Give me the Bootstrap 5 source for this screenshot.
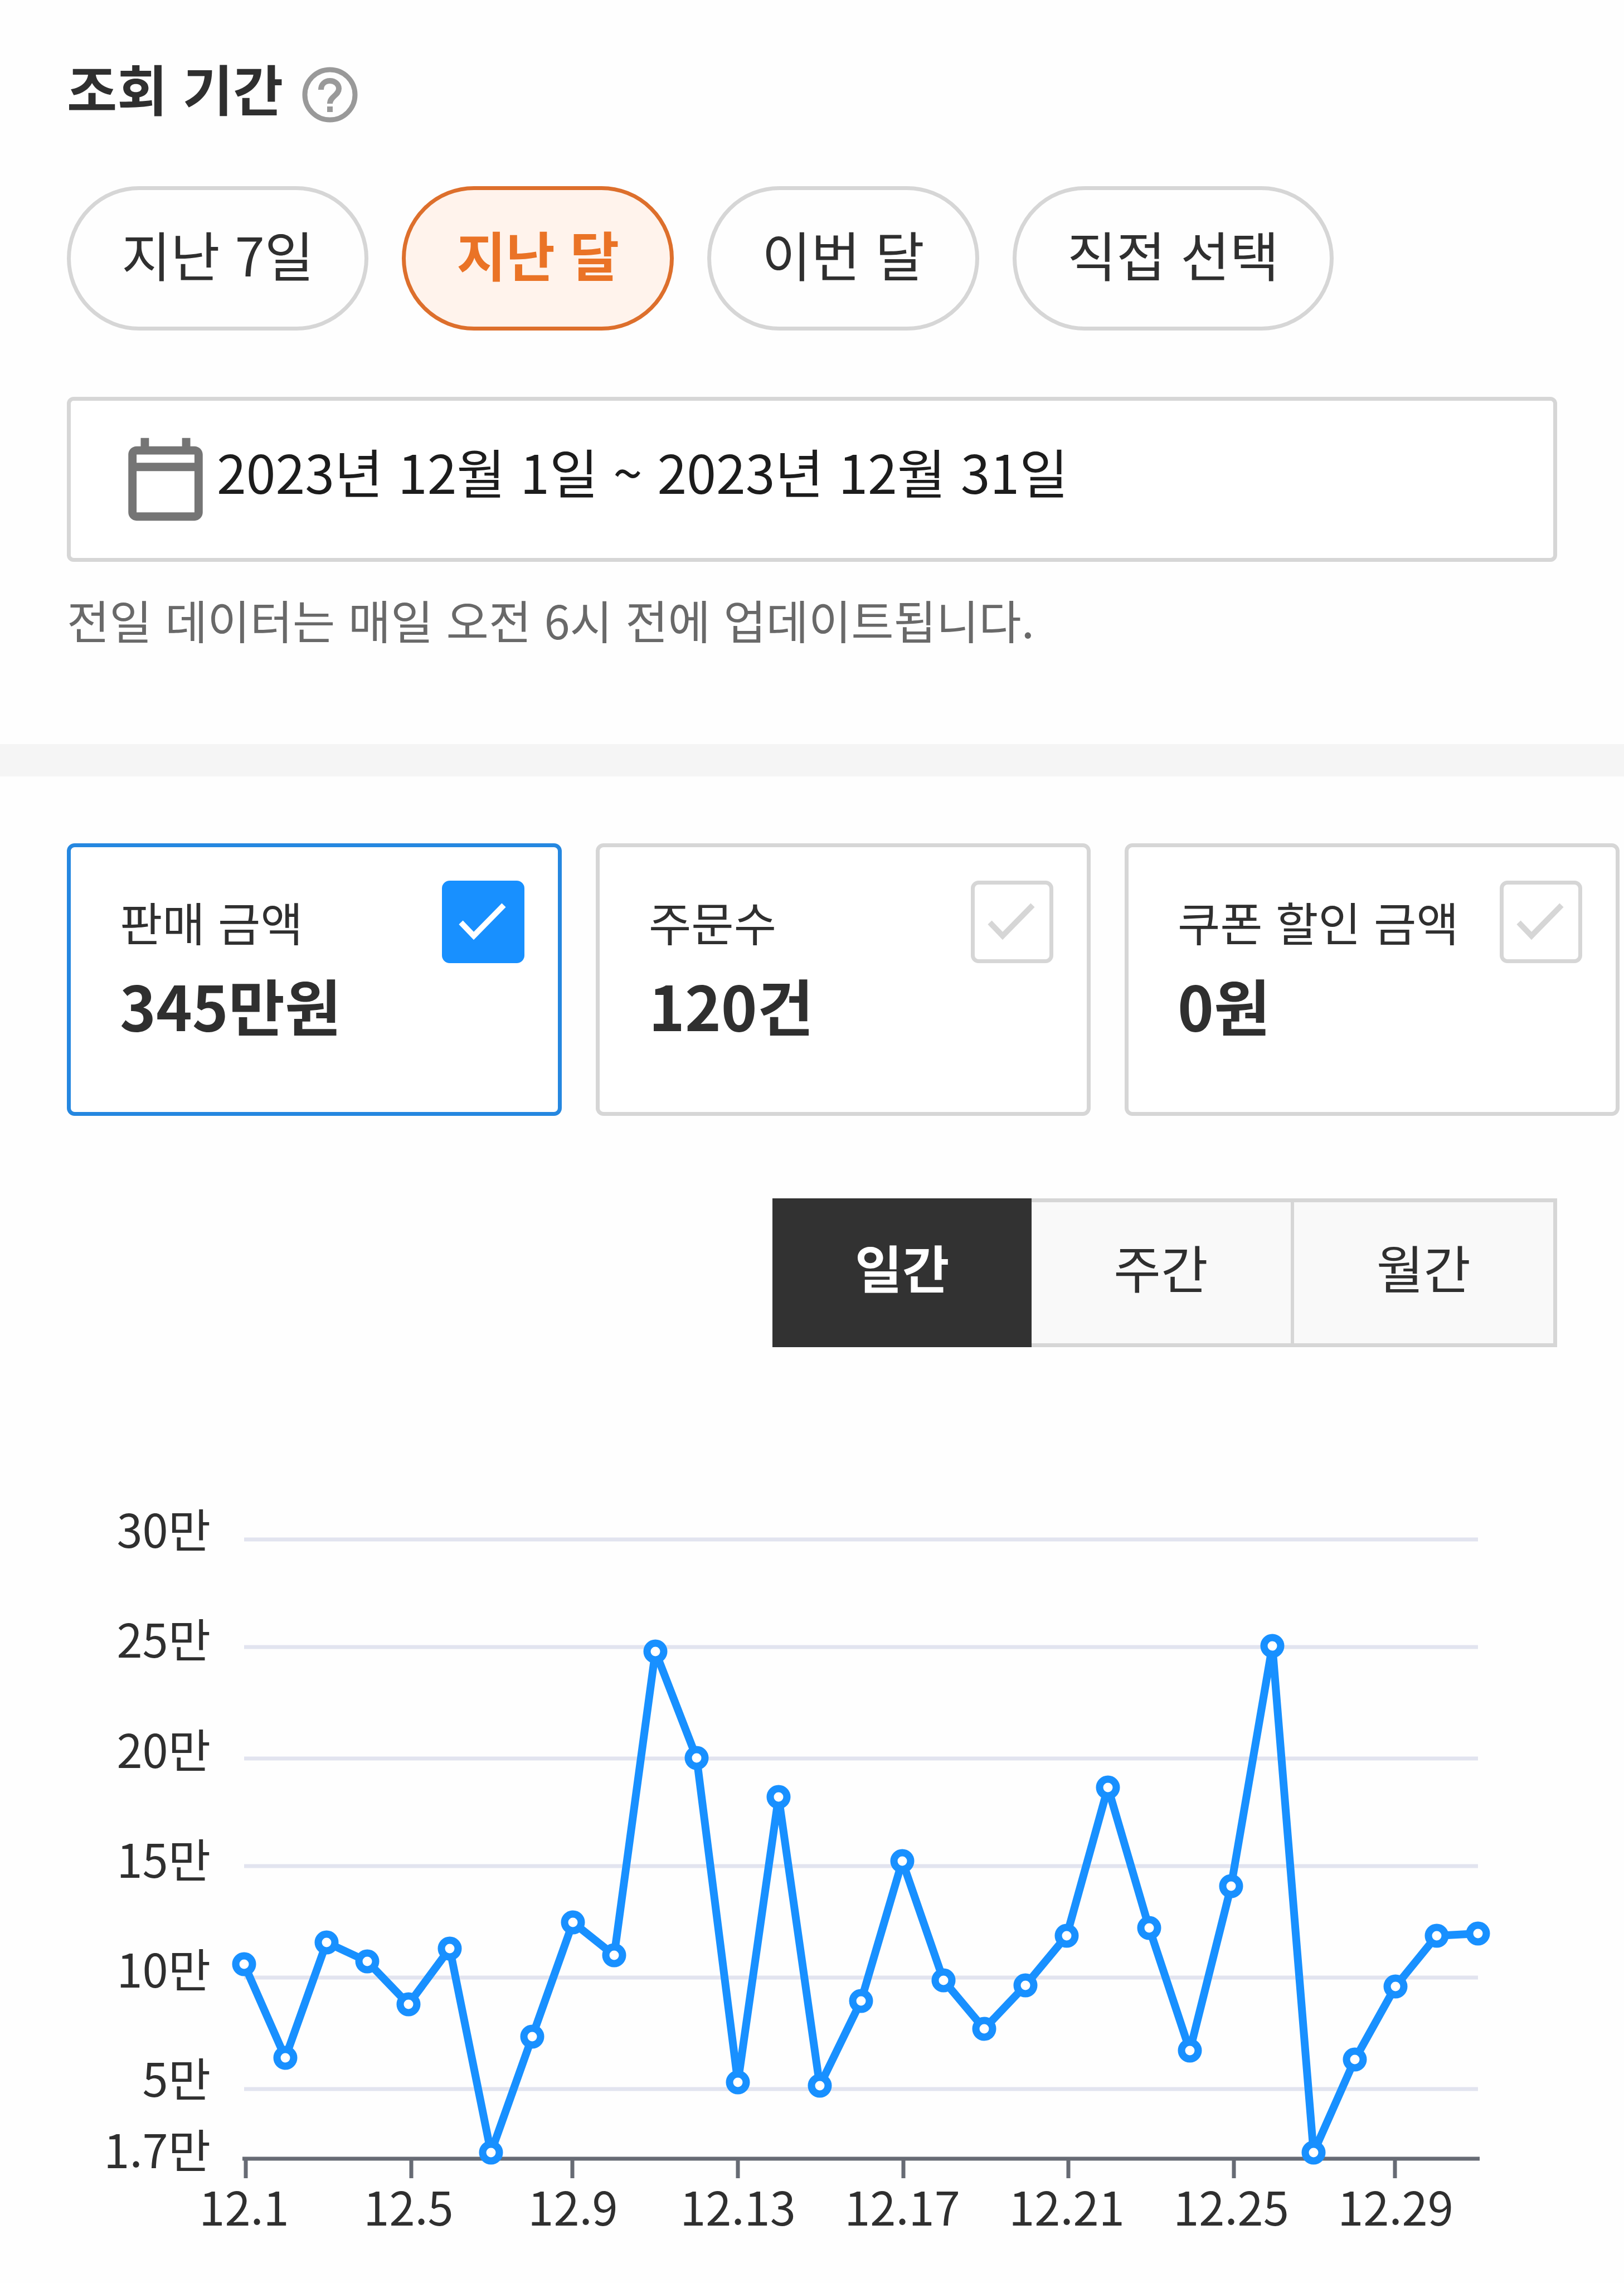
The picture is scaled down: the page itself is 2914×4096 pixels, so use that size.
<!DOCTYPE html>
<html lang="ko">
<head>
<meta charset="utf-8">
<meta name="viewport" content="width=device-width, initial-scale=1">
<title>판매 통계</title>
<link href="https://cdn.jsdelivr.net/npm/bootstrap@5.3.0/dist/css/bootstrap.min.css" rel="stylesheet">
<style>
  :root { --ink: #2f2f2f; --line: #d6d6d6; --blue: #1890ff; --orange: #ea7326; --edge: 120px; }
  body { font-family: "Noto Sans CJK KR", sans-serif; color: var(--ink); background: #fefefe; overflow-x: hidden; }
  .period { padding: 96px var(--edge) 164px; }
  .period-title { font-size: 98px; line-height: 120px; font-weight: 700; padding-bottom: 28px; }
  .help-btn { margin-left: 34px; width: 100px; height: 100px; }
  .pill-row { margin-top: 90px; gap: 60px; }
  .pill-btn { --bs-btn-border-color: var(--line); --bs-btn-color: var(--ink); border-width: 7px; font-size: 96px; line-height: 120px; padding: 54px 91px 71px; }
  .pill-btn.active { --bs-btn-active-bg: #fff3ec; --bs-btn-active-border-color: #dd6f2c; --bs-btn-active-color: var(--orange); font-weight: 700; }
  .date-box { margin-top: 119px; height: 296px; border: 7px solid var(--line); border-radius: 12px; padding-left: 81px; }
  .date-box svg { width: 178px; height: 178px; flex: none; }
  .date-input { font-size: 95px; line-height: 140px; color: #1c1c1c; padding: 0 0 30px 3px; }
  .notice { margin-top: 43px; font-size: 83px; line-height: 120px; color: #696969; }
  .divider { height: 58px; background: #f5f5f5; }
  .stats { padding-top: 120px; }
  .stat-row { padding-left: var(--edge); gap: 61px; overflow: hidden; }
  .stat-card { flex: 0 0 888px; border: 7px solid var(--line); border-radius: 14px; background: #fff; padding: 60px 60px 123px 88px; }
  .stat-card.selected { border-color: #2587e0; }
  .stat-label { font-size: 83px; line-height: 110px; margin-top: 18px; }
  .stat-value { font-size: 110px; line-height: 140px; margin-top: 24px; font-weight: 700; }
  .stat-check.form-check-input { width: 148px; height: 148px; margin: 0; border: 7px solid var(--line); border-radius: 14px; background: #fff center / 148px 148px no-repeat; background-origin: border-box;
    background-image: url("data:image/svg+xml,%3Csvg xmlns='http://www.w3.org/2000/svg' viewBox='0 0 148 148'%3E%3Cpath d='M34 75l23 24 54-55' fill='none' stroke='%23d6d6d6' stroke-width='10'/%3E%3C/svg%3E"); }
  .stat-check.form-check-input:checked { background-color: var(--blue); border-color: var(--blue);
    background-image: url("data:image/svg+xml,%3Csvg xmlns='http://www.w3.org/2000/svg' viewBox='0 0 148 148'%3E%3Cpath d='M34 75l23 24 54-55' fill='none' stroke='%23fff' stroke-width='10'/%3E%3C/svg%3E"); }
  .unit-row { margin-top: 148px; padding-right: var(--edge); }
  .unit-group { width: 1408px; }
  .unit-btn { --bs-btn-bg: #f9f9f9; --bs-btn-border-color: var(--line); --bs-btn-color: var(--ink); flex: 1 1 0; border-width: 7px; font-size: 92px; line-height: 120px; padding: 55px 0 78px; }
  .unit-btn.active { --bs-btn-active-bg: #323232; --bs-btn-active-border-color: #323232; --bs-btn-active-color: #fff; border-width: 7px 0; font-weight: 700; }
  .unit-group > .unit-btn:not(:first-child) { margin-left: 0; border-left: 0; }
  .chart { margin-top: 243px; }
  .chart text { font-size: 83px; fill: var(--ink); }
  .chart .grid-line { stroke: #e2e4ef; stroke-width: 7; }
  .chart .axis-line { stroke: #676b74; stroke-width: 7; }
</style>
</head>
<body>
<main>
  <section class="period">
    <div class="d-flex align-items-center">
      <h1 class="period-title mb-0">조회 기간</h1>
      <button type="button" class="help-btn btn p-0 border-0 d-flex" aria-label="도움말">
        <svg viewBox="0 0 100 100" width="100" height="100" fill="none" stroke="#999" aria-hidden="true">
          <circle cx="50" cy="50" r="45" stroke-width="9"/>
          <path d="M34 41C34 31 41 25 50 25C59 25 66 31 66 39C66 51 50 53 50 66" stroke-width="10"/>
          <path d="M50 71V81" stroke-width="10"/>
        </svg>
      </button>
    </div>
    <div class="pill-row d-flex">
      <button type="button" class="pill-btn btn rounded-pill">지난 7일</button>
      <button type="button" class="pill-btn btn rounded-pill active" aria-pressed="true">지난 달</button>
      <button type="button" class="pill-btn btn rounded-pill">이번 달</button>
      <button type="button" class="pill-btn btn rounded-pill">직접 선택</button>
    </div>
    <label class="date-box d-flex align-items-center bg-white">
      <svg viewBox="0 0 24 24" fill="#757575" aria-hidden="true"><path d="M19 4h-1V2h-2v2H8V2H6v2H5c-1.1 0-2 .9-2 2v14c0 1.1 .9 2 2 2h14c1.1 0 2-.9 2-2V6c0-1.1-.9-2-2-2zm0 16H5V10h14v10zm0-12H5V6h14v2z"/></svg>
      <input type="text" class="date-input form-control-plaintext" readonly aria-label="조회 기간" value="2023년 12월 1일 ~ 2023년 12월 31일">
    </label>
    <p class="notice mb-0">전일 데이터는 매일 오전 6시 전에 업데이트됩니다.</p>
  </section>
  <div class="divider"></div>
  <section class="stats">
    <div class="stat-row d-flex">
      <div class="stat-card selected d-flex justify-content-between align-items-start">
        <label for="sales"><span class="stat-label d-block">판매 금액</span><span class="stat-value d-block">345만원</span></label>
        <input class="stat-check form-check-input" type="checkbox" id="sales" checked>
      </div>
      <div class="stat-card d-flex justify-content-between align-items-start">
        <label for="orders"><span class="stat-label d-block">주문수</span><span class="stat-value d-block">120건</span></label>
        <input class="stat-check form-check-input" type="checkbox" id="orders">
      </div>
      <div class="stat-card d-flex justify-content-between align-items-start">
        <label for="coupon"><span class="stat-label d-block">쿠폰 할인 금액</span><span class="stat-value d-block">0원</span></label>
        <input class="stat-check form-check-input" type="checkbox" id="coupon">
      </div>
    </div>
    <div class="unit-row d-flex justify-content-end">
      <div class="unit-group btn-group" role="group" aria-label="집계 단위">
        <button type="button" class="unit-btn btn rounded-0 active" aria-pressed="true">일간</button>
        <button type="button" class="unit-btn btn rounded-0">주간</button>
        <button type="button" class="unit-btn btn rounded-0">월간</button>
      </div>
    </div>
    <svg class="chart d-block w-100" viewBox="0 2660 2914 1420" role="img" aria-label="일간 판매 금액">
      <defs>
        <marker id="dot" markerUnits="userSpaceOnUse" markerWidth="48" markerHeight="48" refX="24" refY="24">
          <circle cx="24" cy="24" r="15" fill="#fff" stroke="#1890ff" stroke-width="13"/>
        </marker>
      </defs>
      <path class="grid-line" d="M438 2762H2652M438 2955H2652M438 3155H2652M438 3348H2652M438 3548H2652M438 3748H2652"/>
      <path class="axis-line" fill="none" d="M435 3873H2655M441 3873V3908M738 3873V3908M1027 3873V3908M1324 3873V3908M1621 3873V3908M1917 3873V3908M2214 3873V3908M2503 3873V3908"/>
      <g text-anchor="end">
        <text x="378" y="2777">30만</text>
        <text x="378" y="2974">25만</text>
        <text x="378" y="3172">20만</text>
        <text x="378" y="3369">15만</text>
        <text x="378" y="3566">10만</text>
        <text x="378" y="3762">5만</text>
        <text x="378" y="3890">1.7만</text>
      </g>
      <g text-anchor="middle">
        <text x="438" y="3993">12.1</text>
        <text x="733" y="3993">12.5</text>
        <text x="1028" y="3993">12.9</text>
        <text x="1324" y="3993">12.13</text>
        <text x="1619" y="3993">12.17</text>
        <text x="1914" y="3993">12.21</text>
        <text x="2209" y="3993">12.25</text>
        <text x="2504" y="3993">12.29</text>
      </g>
      <polyline fill="none" stroke="#1890ff" stroke-width="14" stroke-linejoin="round" marker-start="url(#dot)" marker-mid="url(#dot)" marker-end="url(#dot)"
        points="438,3524 512,3692 586,3485 659,3519 733,3596 807,3496 881,3862 955,3654 1028,3449 1102,3508 1176,2963 1250,3154 1324,3736 1397,3224 1471,3742 1545,3590 1619,3339 1693,3553 1766,3640 1840,3562 1914,3473 1988,3207 2062,3459 2135,3679 2209,3384 2283,2953 2357,3862 2431,3695 2504,3564 2578,3473 2652,3469"/>
    </svg>
  </section>
</main>
<script src="https://cdn.jsdelivr.net/npm/bootstrap@5.3.0/dist/js/bootstrap.bundle.min.js"></script>
</body>
</html>
